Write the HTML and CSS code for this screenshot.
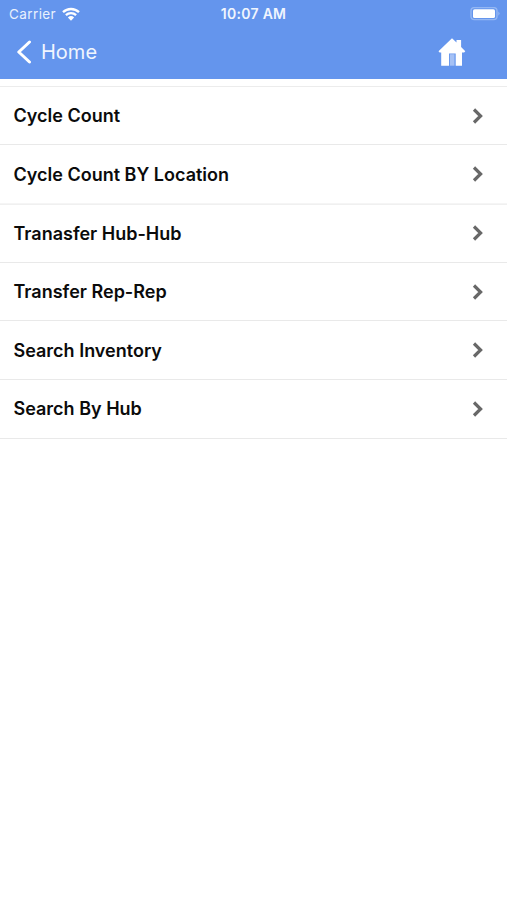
FILE: index.html
```html
<!DOCTYPE html>
<html lang="en">
<head>
    <meta charset="UTF-8">
    <meta name="viewport" content="width=device-width, initial-scale=1.0">
    <title>Home</title>
    <link rel="stylesheet" href="styles.css">
</head>
<body>
    <header class="header">
        <div class="status-bar">
            <div class="carrier">
                <span>Carrier</span>
                <svg class="wifi" viewBox="0 0 18 14" width="18" height="14">
                    <path d="M1 5.2a11.6 11.6 0 0 1 16 0M3.9 8.1a7.4 7.4 0 0 1 10.2 0" fill="none" stroke="#fff" stroke-width="2.3"/>
                    <path d="M9 13.7 5.9 10.4a4.5 4.5 0 0 1 6.2 0z" fill="#fff"/>
                </svg>
            </div>
            <div class="time">10:07 AM</div>
            <div class="battery">
                <svg viewBox="0 0 30 14" width="30" height="14">
                    <rect x="1" y="0.6" width="26" height="12" rx="3.4" fill="none" stroke="#94b7f3" stroke-width="1.4"/>
                    <rect x="3" y="2.2" width="22" height="8.8" rx="1.6" fill="#fff"/>
                    <path d="M28.3 4.4q2.6 2.2 0 4.4z" fill="#94b7f3"/>
                </svg>
            </div>
        </div>
        <nav class="nav-bar">
            <a class="back">
                <svg viewBox="0 0 16 24" width="16" height="24">
                    <path d="M13.5 2 2.8 12l10.7 10" fill="none" stroke="#fff" stroke-width="3" stroke-linecap="round" stroke-linejoin="round"/>
                </svg>
                <span>Home</span>
            </a>
            <a class="home">
                <svg viewBox="0 0 28 28" width="28" height="28">
                    <path d="M14 0.2 18.5 4.6V2h4.6v7l4.2 4.2-1.2 1.3h-2.1v13.2h-6.3V15.5h-6.7v12.2H3.2V14.5H1.6L.5 13.2z" fill="#fff"/>
                    <path d="M11.9 16.2h4.6v11.5h-4.6z" fill="#a5c1f5"/>
                </svg>
            </a>
        </nav>
    </header>
    <ul class="menu">
        <li class="menu-item">
            <span>Cycle Count</span>
            <svg class="arrow" viewBox="0 0 12 18"><path d="m2 2.5 6.6 6.5L2 15.5"/></svg>
        </li>
        <li class="menu-item">
            <span>Cycle Count BY Location</span>
            <svg class="arrow" viewBox="0 0 12 18"><path d="m2 2.5 6.6 6.5L2 15.5"/></svg>
        </li>
        <li class="menu-item group-start">
            <span>Tranasfer Hub-Hub</span>
            <svg class="arrow" viewBox="0 0 12 18"><path d="m2 2.5 6.6 6.5L2 15.5"/></svg>
        </li>
        <li class="menu-item">
            <span>Transfer Rep-Rep</span>
            <svg class="arrow" viewBox="0 0 12 18"><path d="m2 2.5 6.6 6.5L2 15.5"/></svg>
        </li>
        <li class="menu-item">
            <span>Search Inventory</span>
            <svg class="arrow" viewBox="0 0 12 18"><path d="m2 2.5 6.6 6.5L2 15.5"/></svg>
        </li>
        <li class="menu-item">
            <span>Search By Hub</span>
            <svg class="arrow" viewBox="0 0 12 18"><path d="m2 2.5 6.6 6.5L2 15.5"/></svg>
        </li>
    </ul>
</body>
</html>
```

FILE: styles.css
```css
* {
    box-sizing: border-box;
}

body {
    margin: 0;
    min-height: 100vh;
    background-color: #fff;
    color: #0b0b0b;
    font-family: Inter, "Liberation Sans", sans-serif;
}

svg {
    display: block;
    flex-shrink: 0;
}

.header {
    height: 79px;
    background-color: #6495ed;
    color: #fff;
}

/* Status bar */
.status-bar {
    display: grid;
    grid-template-columns: 1fr auto 1fr;
    align-items: center;
    height: 27px;
    padding: 0 7px 0 9px;
    font-size: 13.5px;
}

.carrier {
    display: flex;
    align-items: center;
    gap: 6px;
    letter-spacing: 0.4px;
    color: #e9f1fd;
}

.time {
    font-size: 14px;
    font-weight: 600;
    letter-spacing: 0.3px;
    transform: translateX(-1px);
    color: #f0f5fe;
}

.battery {
    justify-self: end;
}

/* Navigation */
.nav-bar {
    display: flex;
    justify-content: space-between;
    align-items: center;
    height: 50px;
    padding: 0 41px 0 16px;
}

.back {
    display: flex;
    align-items: center;
    gap: 9px;
    font-size: 20px;
    color: #f0f5fe;
}

/* Options list */
.menu {
    margin: 7px 0 0;
    padding: 0;
    list-style: none;
    border-top: 1px solid #ececec;
}

.menu-item {
    display: flex;
    justify-content: space-between;
    align-items: center;
    height: 58.6px;
    padding: 0 23.5px 0 13.5px;
    border-bottom: 1px solid #e9e9e9;
    font-size: 18px;
    font-weight: 600;
}

.menu-item:first-child {
    height: 58px;
}

.menu-item:nth-child(2) {
    height: 59px;
    border-bottom-color: #f5f5f5;
}

.group-start {
    height: 58.8px;
    border-top: 1px solid #f0f0f0;
}

.arrow {
    width: 12px;
    height: 18px;
    fill: none;
    stroke: #686868;
    stroke-width: 3.2;
}
```
